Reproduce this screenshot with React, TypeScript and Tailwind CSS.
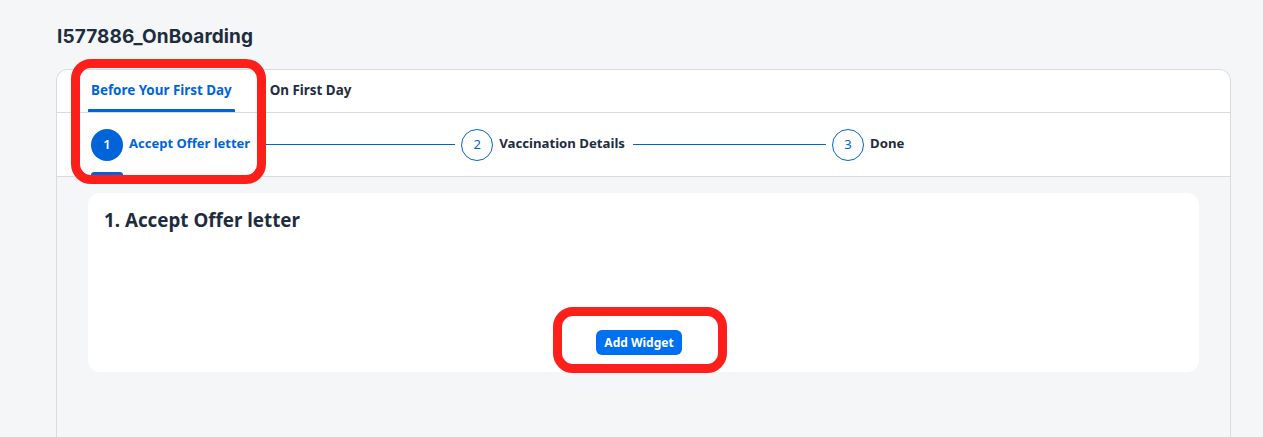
import React from "react";

function Circle({ n, active }: { n: number; active?: boolean }) {
  return (
    <div
      className={
        active
          ? "w-8 h-8 rounded-full bg-[#0064d9] text-white flex items-center justify-center text-[13px] font-semibold shrink-0"
          : "w-8 h-8 rounded-full border border-[#0064d9] bg-white text-[#0064d9] flex items-center justify-center text-[13px] font-normal shrink-0"
      }
    >
      {n}
    </div>
  );
}

export default function App() {
  return (
    <div
      className="relative w-[1263px] h-[437px] overflow-hidden bg-[#f5f6f7]"
      style={{ fontFamily: "'Noto Sans', Inter, sans-serif" }}
    >
      <div className="pl-[57px] pt-[25px] h-[69px]">
        <h1
          className="text-[19px] leading-[24px] font-bold text-[#1d2d3e] tracking-[0.1px]"
          style={{ fontFamily: "Inter, 'Noto Sans', sans-serif" }}
        >
          I577886_OnBoarding
        </h1>
      </div>
      <div className="ml-[56px] w-[1175px] h-[368px] border border-b-0 border-[#d9dbde] rounded-t-[12px] bg-[#f5f6f7] overflow-hidden">
        {/* tabs */}
        <div className="bg-white h-[43px] border-b border-[#d9dbde] flex items-end pl-[31px]">
          <div className="h-full flex flex-col justify-end">
            <div className="px-[3px] pb-[10px] text-[13.4px] leading-[18px] font-bold text-[#0064d9]">
              Before Your First Day
            </div>
            <div className="h-[3px] bg-[#0064d9] rounded-t-[1px]"></div>
          </div>
          <div className="ml-[35px] pb-[13px] text-[13.4px] leading-[18px] font-bold text-[#1d2d3e]">
            On First Day
          </div>
        </div>
        {/* stepper */}
        <div className="bg-white h-[64px] border-b border-[#d9dbde] relative flex items-center pl-[34px]">
          <Circle n={1} active />
          <span className="ml-[6px] text-[13px] font-bold text-[#0064d9] -mt-[2px]">
            Accept Offer letter
          </span>
          <div className="ml-[8px] mr-[6px] w-[197px] h-px bg-[#0064d9]"></div>
          <Circle n={2} />
          <span className="ml-[6px] text-[13.2px] font-bold text-[#1d2d3e] -mt-[2px]">
            Vaccination Details
          </span>
          <div className="ml-[8px] mr-[6px] w-[193px] h-px bg-[#0064d9]"></div>
          <Circle n={3} />
          <span className="ml-[6px] text-[13.2px] font-bold text-[#1d2d3e] -mt-[2px]">
            Done
          </span>
          <div className="absolute left-[34px] bottom-0 w-8 h-[4px] bg-[#0064d9] rounded-t-[3px]"></div>
        </div>
        {/* content */}
        <div className="px-[31px] pt-[16px]">
          <div className="bg-white rounded-[12px] h-[179px] px-4 pt-[14px] flex flex-col">
            <h2 className="text-[18.8px] leading-[26px] font-bold text-[#1d2d3e]">
              1. Accept Offer letter
            </h2>
            <div className="flex-1 flex items-end justify-center pb-[17px]">
              <button className="h-[25px] px-[8px] rounded-[6px] bg-[#0070f2] text-white text-[12px] font-bold ml-[-9px]">
                Add Widget
              </button>
            </div>
          </div>
        </div>
      </div>
      {/* annotations */}
      <div className="absolute left-[71px] top-[59px] w-[195px] h-[125px] border-[9px] border-[#ff1f1a] rounded-[20px]"></div>
      <div className="absolute left-[553px] top-[307px] w-[174px] h-[66px] border-[9px] border-[#ff1f1a] rounded-[20px]"></div>
    </div>
  );
}
